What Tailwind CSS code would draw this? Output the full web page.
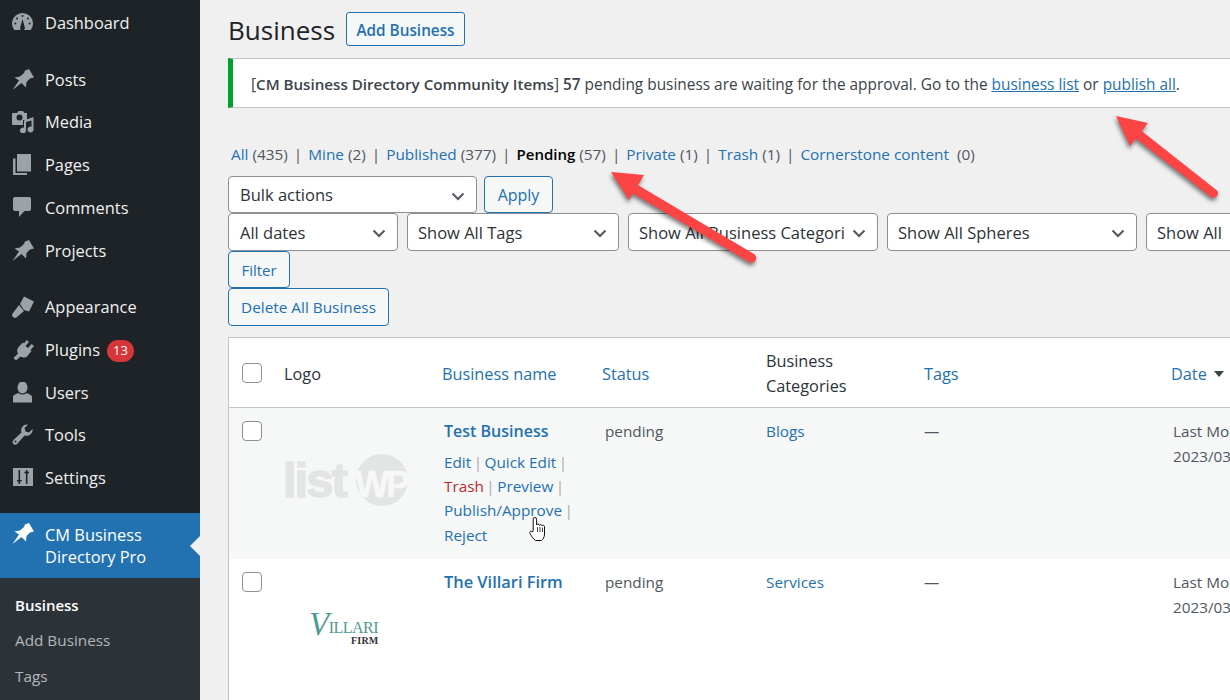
<!DOCTYPE html>
<html>
<head>
    <meta charset="utf-8">
    <script src="https://cdn.jsdelivr.net/npm/@tailwindcss/browser@4"></script>
</head>
<body class="bg-[#f0f0f1] overflow-hidden font-['Open_Sans','Noto_Sans',sans-serif] text-[#3c434a]">
<div class="relative w-[1230px] h-[700px] overflow-hidden flex">

    <!-- Sidebar -->
    <aside class="w-[200px] h-[700px] shrink-0 bg-[#1d2327] text-[16.4px] text-[#f0f0f1]">
        <div class="h-[46px] flex items-center pl-[12px] gap-[11px]">
            <svg class="w-[22px] h-[22px]" viewBox="0 0 22 22"><path d="M2.3 18A10.5 10.5 0 1 1 18.7 18Z" fill="#9ca2a7"/><g fill="#1d2327"><circle cx="10.500" cy="4" r="1"/><circle cx="5" cy="6.500" r="1"/><circle cx="16" cy="6.500" r="1"/><circle cx="3.300" cy="11.500" r="1"/><circle cx="17.700" cy="11.500" r="1"/><path d="M10.500 7L12.800 15.500A2.400 2.400 0 1 1 8.200 15.500Z"/></g></svg>
            <span>Dashboard</span>
        </div>
        <div class="h-[11px]"></div>
        <div class="h-[43px] pt-[2px] flex items-center pl-[12px] gap-[11px]">
            <svg class="w-[22px] h-[22px]" viewBox="0 0 22 22" fill="#9ca2a7"><path d="M17 0L22 8.500L18 9.500L14.500 13L14 18.500L9.500 14L0.500 21L7 11.500L2.500 8.500L8 7.500L12 4L13 1.500Z"/></svg>
            <span class="mt-[2px]">Posts</span>
        </div>
        <div class="h-[43px] flex items-center pl-[12px] gap-[11px]">
            <svg class="w-[22px] h-[22px]" viewBox="0 0 22 22" fill="#9ca2a7"><path fill-rule="evenodd" d="M1 2H5L6.500 0H11L12.500 2H15V9H11V14H1a1 1 0 0 1-1-1V3a1 1 0 0 1 1-1zM7.500 3.500a3 3 0 1 0 0 6 3 3 0 0 0 0-6z"/><path d="M21.500 6V18.500a3 3 0 1 1-2-2.800V9.500L14 11V19.500a3 3 0 1 1-2-2.800V9.500z"/></svg>
            <span class="mt-[2px]">Media</span>
        </div>
        <div class="h-[43px] flex items-center pl-[12px] gap-[11px]">
            <svg class="w-[22px] h-[22px]" viewBox="0 0 22 22" fill="#9ca2a7"><path d="M5 0H19V17.500H5zM1 4.500H3.500V19H15V21H1z"/></svg>
            <span class="mt-[2px]">Pages</span>
        </div>
        <div class="h-[43px] flex items-center pl-[12px] gap-[11px]">
            <svg class="w-[22px] h-[22px]" viewBox="0 0 22 22" fill="#9ca2a7"><path d="M3 0H17a2 2 0 0 1 2 2V12a2 2 0 0 1-2 2H12.500L7 20V14H3a2 2 0 0 1-2-2V2a2 2 0 0 1 2-2z"/></svg>
            <span class="mt-[2px]">Comments</span>
        </div>
        <div class="h-[43px] flex items-center pl-[12px] gap-[11px]">
            <svg class="w-[22px] h-[22px]" viewBox="0 0 22 22" fill="#9ca2a7"><path d="M17 0L22 8.500L18 9.500L14.500 13L14 18.500L9.500 14L0.500 21L7 11.500L2.500 8.500L8 7.500L12 4L13 1.500Z"/></svg>
            <span class="mt-[2px]">Projects</span>
        </div>
        <div class="h-[13px]"></div>
        <div class="h-[43px] flex items-center pl-[12px] gap-[11px]">
            <svg class="w-[22px] h-[22px]" viewBox="0 0 22 22" fill="#9ca2a7"><path d="M12 0.500L22 5.500L17 15.500L12 14L8 8zM7 9L12 15L5 21a2.500 2.500 0 0 1-4-4z"/></svg>
            <span class="mt-[2px]">Appearance</span>
        </div>
        <div class="h-[43px] flex items-center pl-[12px] gap-[11px]">
            <svg class="w-[22px] h-[22px]" viewBox="0 0 22 22" fill="#9ca2a7"><path d="M14.500 1L17 3L13.500 7L16 9L19.500 5L22 7L18.500 11L19.500 12L15.500 17C13.500 19 10.500 19 8.500 17.500L4 21.500L1.500 19L6 14.500C4.500 12.500 5 9.500 7 7.500L11 3.500L12 4.500z"/></svg>
            <span class="mt-[2px]">Plugins</span>
            <span class="-ml-[4px] mt-[2px] w-[27px] h-[22px] rounded-full bg-[#d63638] text-white text-[13px] flex items-center justify-center">13</span>
        </div>
        <div class="h-[43px] flex items-center pl-[12px] gap-[11px]">
            <svg class="w-[22px] h-[22px]" viewBox="0 0 22 22" fill="#9ca2a7"><ellipse cx="10.500" cy="5.500" rx="5" ry="6"/><path d="M1 15C1 13 4 12 6.500 11C9 13 12 13 14.500 11C17 12 20 13 20 15V20.500H1z"/></svg>
            <span class="mt-[2px]">Users</span>
        </div>
        <div class="h-[42px] flex items-center pl-[12px] gap-[11px]">
            <svg class="w-[22px] h-[22px]" viewBox="0 0 22 22" fill="#9ca2a7"><path fill-rule="evenodd" d="M20.500 5A6 6 0 0 1 12.500 11.500L5.500 19.500C4.300 21 2.500 21 1.300 19.900S.3 16.900 1.700 15.700L9.500 8.500A6 6 0 0 1 16 .5L12.500 4L13.500 7.500L17 8.500zM3.500 16.500a1 1 0 1 0 0 2 1 1 0 0 0 0-2z"/></svg>
            <span>Tools</span>
        </div>
        <div class="h-[43px] flex items-center pl-[12px] gap-[11px]">
            <svg class="w-[22px] h-[22px]" viewBox="0 0 22 22"><rect x="1" y="1" width="20" height="18" fill="#9ca2a7"/><path d="M7.300 3V17M5 13.700H9.600M14.700 3V17M12.400 5.500H17" stroke="#1d2327" stroke-width="1.600" fill="none"/></svg>
            <span class="mt-[2px]">Settings</span>
        </div>
        <div class="h-[14px]"></div>
        <div class="relative h-[65px] bg-[#2271b1] text-white flex items-start pl-[12px] gap-[11px] pt-[11px]">
            <svg class="w-[22px] h-[22px] -mt-[1px] shrink-0" viewBox="0 0 22 22" fill="#ffffff"><path d="M17 0L22 8.500L18 9.500L14.500 13L14 18.500L9.500 14L0.500 21L7 11.500L2.500 8.500L8 7.500L12 4L13 1.500Z"/></svg>
            <span class="leading-[22px]">CM Business<br>Directory Pro</span>
            <div class="absolute right-0 top-[23px] w-0 h-0 border-y-[10px] border-y-transparent border-r-[10px] border-r-[#f0f0f1]"></div>
        </div>
        <div class="bg-[#2c3338] h-[122px] pt-[9px] text-[15.3px] text-[#f0f0f1b3] pl-[15px]">
            <div class="h-[36px] flex items-center text-white font-semibold text-[15px]">Business</div>
            <div class="h-[35px] flex items-center">Add Business</div>
            <div class="h-[36px] flex items-center">Tags</div>
        </div>
    </aside>

    <!-- Main content -->
    <main class="flex-1 min-w-0 pl-[28px] overflow-hidden text-[15.35px]">
        <div class="h-[58px] flex items-start pt-[12px] gap-[11px]">
            <h1 class="text-[26px] leading-[36px] text-[#1d2327]">Business</h1>
            <button class="w-[119px] h-[34px] pt-[2px] border border-[#2271b1] rounded-[3px] bg-[#f6f7f7] text-[#2271b1] font-semibold text-[15.3px]">Add Business</button>
        </div>

        <div class="h-[50px] w-[1010px] bg-white border-y border-[#c3c4c7] border-l-[5px] border-l-[#00a32a] flex items-center pl-[18px] pt-[3px] whitespace-nowrap text-[15.42px]">
            <span>[<b class="font-semibold text-[15.15px]">CM Business Directory Community Items</b>] <b class="font-semibold text-[15.3px]">57</b> pending business are waiting for the approval. Go to the <a class="text-[#2271b1] underline">business list</a> or <a class="text-[#2271b1] underline">publish all</a>.</span>
        </div>

        <div class="mt-[35px] h-[22px] flex items-center gap-[6px] whitespace-nowrap pl-[3px] text-[#50575e]">
            <span><a class="text-[#2271b1]">All</a> (435)</span><span>|</span>
            <span><a class="text-[#2271b1]">Mine</a> (2)</span><span>|</span>
            <span><a class="text-[#2271b1]">Published</a> (377)</span><span>|</span>
            <span><b class="font-semibold text-black text-[15px]">Pending</b> (57)</span><span>|</span>
            <span><a class="text-[#2271b1]">Private</a> (1)</span><span>|</span>
            <span><a class="text-[#2271b1]">Trash</a> (1)</span><span>|</span>
            <span><a class="text-[#2271b1]">Cornerstone content</a>&nbsp; (0)</span>
        </div>

        <div class="mt-[11px] flex gap-[7px] h-[37px]">
            <div class="w-[249px] h-[37px] pl-[11px] pr-[10px] pt-[2px] bg-white border border-[#8c8f94] rounded-[4px] flex items-center justify-between text-[16.5px] text-[#2c3338]"><span>Bulk actions</span><svg class="w-[16px] h-[16px]" viewBox="0 0 16 16" fill="none" stroke="#50575e" stroke-width="2"><path d="M2.500 5.500L8 11l5.500-5.500"/></svg></div>
            <button class="w-[69px] h-[37px] border border-[#2271b1] rounded-[4px] bg-[#f6f7f7] text-[#2271b1] text-[16px]">Apply</button>
        </div>

        <div class="flex gap-[9px] whitespace-nowrap">
            <div class="w-[170px] shrink-0 h-[38px] pl-[11px] pr-[10px] pt-[2px] bg-white border border-[#8c8f94] rounded-[4px] flex items-center justify-between text-[16.5px] text-[#2c3338]"><span>All dates</span><svg class="w-[16px] h-[16px]" viewBox="0 0 16 16" fill="none" stroke="#50575e" stroke-width="2"><path d="M2.500 5.500L8 11l5.500-5.500"/></svg></div>
            <div class="w-[212px] shrink-0 h-[38px] pl-[10px] pr-[10px] pt-[2px] bg-white border border-[#8c8f94] rounded-[4px] flex items-center justify-between text-[16.5px] text-[#2c3338]"><span>Show All Tags</span><svg class="w-[16px] h-[16px]" viewBox="0 0 16 16" fill="none" stroke="#50575e" stroke-width="2"><path d="M2.500 5.500L8 11l5.500-5.500"/></svg></div>
            <div class="w-[250px] shrink-0 h-[38px] pl-[10px] pr-[10px] pt-[2px] bg-white border border-[#8c8f94] rounded-[4px] flex items-center justify-between text-[16.5px] text-[#2c3338] overflow-hidden"><span class="w-[210px] overflow-hidden">Show All Business Categori</span><svg class="w-[16px] h-[16px] shrink-0" viewBox="0 0 16 16" fill="none" stroke="#50575e" stroke-width="2"><path d="M2.500 5.500L8 11l5.500-5.500"/></svg></div>
            <div class="w-[250px] shrink-0 h-[38px] pl-[10px] pr-[10px] pt-[2px] bg-white border border-[#8c8f94] rounded-[4px] flex items-center justify-between text-[16.5px] text-[#2c3338]"><span>Show All Spheres</span><svg class="w-[16px] h-[16px]" viewBox="0 0 16 16" fill="none" stroke="#50575e" stroke-width="2"><path d="M2.500 5.500L8 11l5.500-5.500"/></svg></div>
            <div class="w-[200px] shrink-0 h-[38px] pl-[10px] pt-[2px] bg-white border border-[#8c8f94] rounded-[4px] flex items-center text-[16.5px] text-[#2c3338]"><span>Show All</span></div>
        </div>

        <button class="block w-[62px] h-[37px] pt-[2px] border border-[#2271b1] rounded-[4px] bg-[#f6f7f7] text-[#2271b1] text-[15px]">Filter</button>
        <button class="block w-[161px] h-[38px] pt-[2px] border border-[#2271b1] rounded-[4px] bg-[#f6f7f7] text-[#2271b1] text-[15.35px]">Delete All Business</button>

        <!-- Table -->
        <div class="mt-[11px] w-[1010px] h-[400px] bg-white border border-[#c3c4c7] text-[16.3px]">
            <div class="h-[70px] pt-[1px] border-b border-[#c3c4c7] flex items-center text-[#2271b1]">
                <div class="w-[54px] pl-[13px] shrink-0"><span class="block w-[20px] h-[20px] border border-[#8c8f94] rounded-[4px] bg-white"></span></div>
                <div class="w-[159px] shrink-0 pl-[1px] pt-[2px] text-[#2c3338]">Logo</div>
                <div class="w-[160px] shrink-0 pt-[2px]">Business name</div>
                <div class="w-[164px] shrink-0 pt-[2px]">Status</div>
                <div class="w-[158px] shrink-0 pt-[2px] text-[#2c3338] leading-[25px]">Business<br>Categories</div>
                <div class="w-[247px] shrink-0 pt-[2px]">Tags</div>
                <div class="flex items-center gap-[7px] pt-[2px]">Date <span class="w-0 h-0 border-x-[5px] border-x-transparent border-t-[6px] border-t-[#3c434a]"></span></div>
            </div>
            <div class="h-[151px] bg-[#f6f7f7] flex">
                <div class="w-[54px] pl-[13px] pt-[13px] shrink-0"><span class="block w-[20px] h-[20px] border border-[#8c8f94] rounded-[4px] bg-white"></span></div>
                <div class="w-[161px] shrink-0 pt-[46px]">
                    <div class="relative w-[122px] h-[52px] font-['Liberation_Sans',sans-serif] font-bold text-[#e3e4e4] text-[49px] leading-[52px] tracking-[-2px] [-webkit-text-stroke:1.5px_#e3e4e4]">list<span class="absolute left-[73px] top-0 w-[52px] h-[52px] rounded-full bg-[#e3e4e4] text-[#f6f7f7] [-webkit-text-stroke:0.5px_#f6f7f7] text-[36px] leading-[61px] tracking-[-3px] whitespace-nowrap indent-[-1px]">WP</span></div>
                </div>
                <div class="w-[161px] shrink-0 pt-[11px]">
                    <div class="text-[#2271b1] font-semibold text-[16px] leading-[24px]">Test Business</div>
                    <div class="mt-[7px] text-[15.3px] leading-[24px] text-[#a7aaad] whitespace-nowrap">
                        <a class="text-[#2271b1]">Edit</a><span class="mx-[2.5px]">|</span><a class="text-[#2271b1]">Quick Edit</a><span class="mx-[2.5px]">|</span><br>
                        <a class="text-[#b32d2e]">Trash</a><span class="mx-[2.5px]">|</span><a class="text-[#2271b1]">Preview</a><span class="mx-[2.5px]">|</span><br>
                        <a class="text-[#2271b1]">Publish/Approve</a><span class="mx-[2.5px]">|</span><br>
                        <a class="block mt-[1px] text-[#2271b1]">Reject</a>
                    </div>
                </div>
                <div class="w-[161px] shrink-0 pt-[12px] text-[15.3px] text-[#50575e]">pending</div>
                <div class="w-[158px] shrink-0 pt-[12px] text-[15.3px] text-[#2271b1]">Blogs</div>
                <div class="w-[249px] shrink-0 pt-[12px] text-[15.3px] text-[#50575e]">—</div>
                <div class="pt-[11px] text-[15.3px] leading-[25px] text-[#50575e] whitespace-nowrap">Last Modified<br>2023/03/14</div>
            </div>
            <div class="h-[140px] flex">
                <div class="w-[54px] pl-[13px] pt-[13px] shrink-0"><span class="block w-[20px] h-[20px] border border-[#8c8f94] rounded-[4px] bg-white"></span></div>
                <div class="w-[161px] shrink-0 pt-[54px] pl-[26px] font-['Liberation_Serif',serif]">
                    <div class="flex items-end h-[23px] text-[#4f9a96] tracking-[-0.5px] whitespace-nowrap"><i class="text-[33px] leading-[23px]">V</i><span class="text-[16px] leading-[16px]">ILLARI</span></div>
                    <div class="text-[#333333] text-[10px] leading-[10px] pl-[42px] font-bold tracking-[0.2px]">FIRM</div>
                </div>
                <div class="w-[161px] shrink-0 pt-[11px] text-[#2271b1] font-semibold text-[16.4px] leading-[24px]">The Villari Firm</div>
                <div class="w-[161px] shrink-0 pt-[12px] text-[15.3px] text-[#50575e]">pending</div>
                <div class="w-[158px] shrink-0 pt-[12px] text-[15.3px] text-[#2271b1]">Services</div>
                <div class="w-[249px] shrink-0 pt-[12px] text-[15.3px] text-[#50575e]">—</div>
                <div class="pt-[11px] text-[15.3px] leading-[25px] text-[#50575e] whitespace-nowrap">Last Modified<br>2023/03/14</div>
            </div>
        </div>
    </main>

    <!-- Annotation arrows painted on the screenshot -->
    <svg class="absolute left-0 top-0 w-[1230px] h-[700px] pointer-events-none" viewBox="0 0 1230 700" fill="none">
        <g class="[filter:drop-shadow(-1px_3px_2px_rgba(0,0,0,0.5))]" fill="#fb4444">
            <path d="M1129 121L1217 190.500A4.500 4.500 0 0 1 1211 197L1125 130Z"/>
            <path d="M1116 116L1148 123L1130 146Z"/>
            <path d="M626 178L754 254A4.500 4.500 0 0 1 749 262L622 187Z"/>
            <path d="M611 172L644 175L629 200Z"/>
        </g>
        <!-- hand cursor -->
        <path d="M533.200 530V519.200a1.700 1.700 0 0 1 3.400 0V525a1.500 1.500 0 0 1 2.800.3a1.500 1.500 0 0 1 2.700.4a1.400 1.400 0 0 1 2.400 1V534c0 3-1.500 5.500-3 6.500h-6c-2-1-4-4.500-5.500-7c-1-1.800 1-3 2.500-1.500z" fill="#fff" stroke="#111" stroke-width="1"/>
        <path d="M537.500 527V532M540 527V532M542.500 527.500V532" stroke="#111" stroke-width="0.800"/>
    </svg>
</div>
</body>
</html>
